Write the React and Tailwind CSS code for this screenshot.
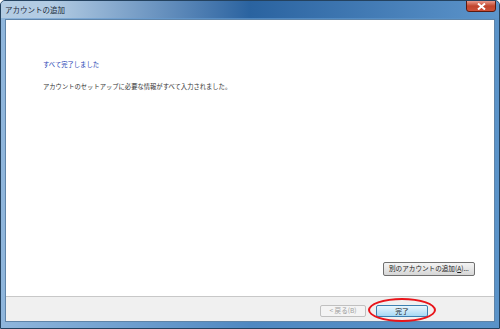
import React from "react";

export default function App() {
  const font = { fontFamily: '"Noto Sans CJK JP", "Liberation Sans", sans-serif' };
  return (
    <div
      className="w-[500px] h-[329px] flex flex-col border border-[#24425f] rounded-t-[5px] overflow-hidden bg-[#5a93c9]"
      style={font}
    >
      <div className="h-[17px] flex items-start justify-between pl-[4px] pr-[3px] shrink-0 bg-linear-to-r from-[#b3cce3] from-10% via-[#2a63a0] via-50% to-[#5d95cb]">
        <span className="text-[7.5px] leading-[17px] text-[#1b2a3a]">アカウントの追加</span>
        <div className="w-[30px] h-[12px] mt-[-1px] rounded-b-[3px] border border-[#5a1a10] bg-linear-to-b from-[#e99a8c] via-[#c0452c] to-[#cc5038] flex items-center justify-center">
          <svg width="9" height="7" viewBox="0 0 9 7">
            <path d="M1 0.5 L8 6.5 M8 0.5 L1 6.5" stroke="#ffffff" strokeWidth="2" />
          </svg>
        </div>
      </div>
      <div className="flex-1 flex flex-col px-[4px] pb-[6px] pt-[1px] bg-linear-to-r from-[#8fb6dc] via-[#4f88c1] to-[#5a93c9]">
        <div className="flex-1 flex flex-col border border-[#5f84a8] bg-white">
          <div className="flex-1 flex flex-col bg-white pl-[37px] pr-[19px]">
            <div className="pt-[40px] text-[6.3px] leading-[9px] text-[#1e3fb4]">すべて完了しました</div>
            <div className="pt-[13px] text-[6.3px] leading-[9px] text-[#333333]">
              アカウントのセットアップに必要な情報がすべて入力されました。
            </div>
            <div className="flex-1" />
            <div className="flex justify-end pb-[20px]">
              <div className="w-[92px] h-[14px] rounded-[2px] border border-[#707070] bg-linear-to-b from-[#f4f4f4] to-[#d6d6d6] flex items-center justify-center text-[6.6px] text-[#1a1a1a]">
                別のアカウントの追加(<span className="underline">A</span>)...
              </div>
            </div>
          </div>
          <div className="h-[25px] shrink-0 border-t border-[#c8c8c8] bg-[#f0f0f0] flex items-start justify-end pt-[8px] pr-[66px] gap-[10px]">
            <div className="w-[46px] h-[12px] rounded-[2px] border border-[#c0c0c0] bg-[#f4f4f4] flex items-center justify-center text-[6.6px] text-[#a0a0a0]">
              &lt; 戻る(B)
            </div>
            <div className="relative">
              <div className="w-[52px] h-[12px] rounded-[2px] border border-[#3c7fb1] bg-linear-to-b from-[#eaf6fd] to-[#a7d9f5] flex items-center justify-center text-[6.8px] text-[#1a1a1a]">
                完了
              </div>
              <div className="absolute left-[-8px] top-[-7px] w-[68px] h-[24px] rounded-[50%] border-[2.5px] border-[#e8141a]" />
            </div>
          </div>
        </div>
      </div>
    </div>
  );
}
